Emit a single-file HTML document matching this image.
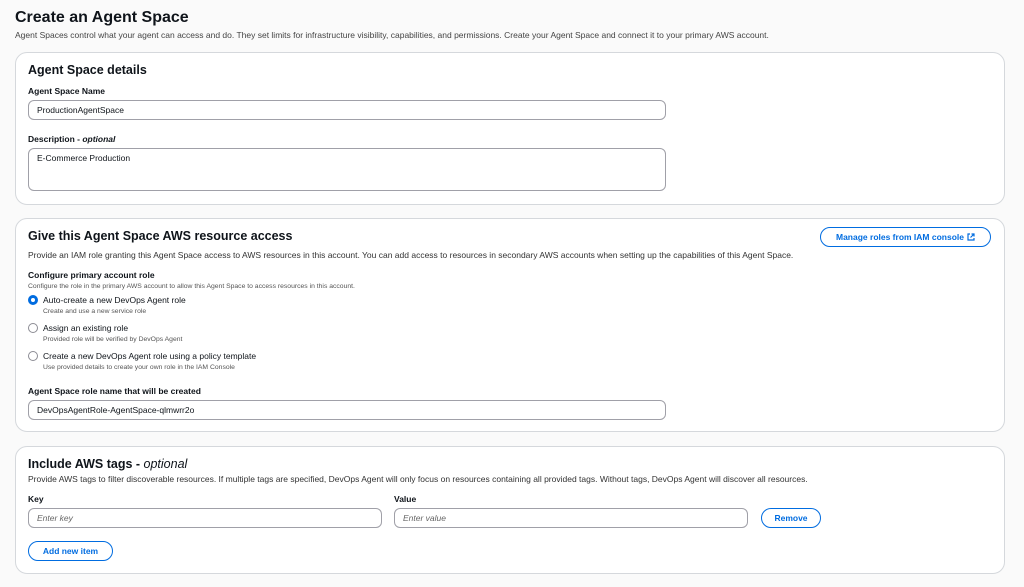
<!DOCTYPE html>
<html><head><meta charset="utf-8"><style>
*{box-sizing:border-box;margin:0;padding:0}
body{width:1024px;height:587px;background:#fafafa;font-family:"Liberation Sans",sans-serif;color:#0f141a;position:relative;overflow:hidden}
.a{position:absolute;white-space:nowrap}
.card{position:absolute;left:15px;width:990px;background:#fff;border:1px solid #d5d8dc;border-radius:12px}
h1{font-size:16px;font-weight:bold}
.h2{font-size:12.5px;font-weight:bold}
.sm{font-size:8.5px;color:#333}
.lb{font-size:8.5px;font-weight:bold}
.xs{font-size:6.8px;color:#555}
.inp{position:absolute;height:20px;border:1px solid #a0a0a8;border-radius:6px;font-size:8.5px;padding:0 8px;line-height:18px;background:#fff}
.ph{color:#666;font-style:italic}
.btn{position:absolute;height:20px;border:1.5px solid #006ce0;border-radius:10px;color:#006ce0;font-size:8.5px;font-weight:bold;display:flex;align-items:center;justify-content:center;gap:3px;background:#fff}
.rad{position:absolute;width:10px;height:10px;border:1px solid #8c8c94;border-radius:50%;background:#fff}
.rad.on{border:3px solid #006ce0}
.rt{font-size:8.5px}
</style></head><body>
<h1 class="a" style="left:15px;top:9px">Create an Agent Space</h1>
<div class="a sm" style="left:15px;top:30px;color:#444">Agent Spaces control what your agent can access and do. They set limits for infrastructure visibility, capabilities, and permissions. Create your Agent Space and connect it to your primary AWS account.</div>

<div class="card" style="top:52px;height:153px"></div>
<div class="a h2" style="left:28px;top:63px">Agent Space details</div>
<div class="a lb" style="left:28px;top:86px">Agent Space Name</div>
<div class="inp" style="left:28px;top:100px;width:638px">ProductionAgentSpace</div>
<div class="a lb" style="left:28px;top:134px">Description - <i>optional</i></div>
<div class="inp" style="left:28px;top:148px;width:638px;height:43px;line-height:18px">E-Commerce Production</div>

<div class="card" style="top:218px;height:214px"></div>
<div class="a h2" style="left:28px;top:229px">Give this Agent Space AWS resource access</div>
<div class="btn" style="left:820px;top:227px;width:171px">Manage roles from IAM console <svg width="8" height="8" viewBox="0 0 8 8"><path d="M3 1H1v6h6V5M4.5 1H7v2.5M7 1 3.5 4.5" fill="none" stroke="#006ce0" stroke-width="1.2"/></svg></div>
<div class="a sm" style="left:28px;top:250px">Provide an IAM role granting this Agent Space access to AWS resources in this account. You can add access to resources in secondary AWS accounts when setting up the capabilities of this Agent Space.</div>
<div class="a lb" style="left:28px;top:270px">Configure primary account role</div>
<div class="a xs" style="left:28px;top:283px">Configure the role in the primary AWS account to allow this Agent Space to access resources in this account.</div>
<div class="rad on" style="left:28px;top:295px"></div>
<div class="a rt" style="left:43px;top:295px">Auto-create a new DevOps Agent role</div>
<div class="a xs" style="left:43px;top:308px">Create and use a new service role</div>
<div class="rad" style="left:28px;top:323px"></div>
<div class="a rt" style="left:43px;top:323px">Assign an existing role</div>
<div class="a xs" style="left:43px;top:336px">Provided role will be verified by DevOps Agent</div>
<div class="rad" style="left:28px;top:351px"></div>
<div class="a rt" style="left:43px;top:351px">Create a new DevOps Agent role using a policy template</div>
<div class="a xs" style="left:43px;top:364px">Use provided details to create your own role in the IAM Console</div>
<div class="a lb" style="left:28px;top:386px">Agent Space role name that will be created</div>
<div class="inp" style="left:28px;top:400px;width:638px">DevOpsAgentRole-AgentSpace-qlmwrr2o</div>

<div class="card" style="top:446px;height:128px"></div>
<div class="a h2" style="left:28px;top:457px">Include AWS tags - <i style="font-weight:normal">optional</i></div>
<div class="a sm" style="left:28px;top:474px">Provide AWS tags to filter discoverable resources. If multiple tags are specified, DevOps Agent will only focus on resources containing all provided tags. Without tags, DevOps Agent will discover all resources.</div>
<div class="a lb" style="left:28px;top:494px">Key</div>
<div class="a lb" style="left:394px;top:494px">Value</div>
<div class="inp ph" style="left:28px;top:508px;width:354px">Enter key</div>
<div class="inp ph" style="left:394px;top:508px;width:354px">Enter value</div>
<div class="btn" style="left:761px;top:508px;width:60px">Remove</div>
<div class="btn" style="left:28px;top:541px;width:85px">Add new item</div>
</body></html>
